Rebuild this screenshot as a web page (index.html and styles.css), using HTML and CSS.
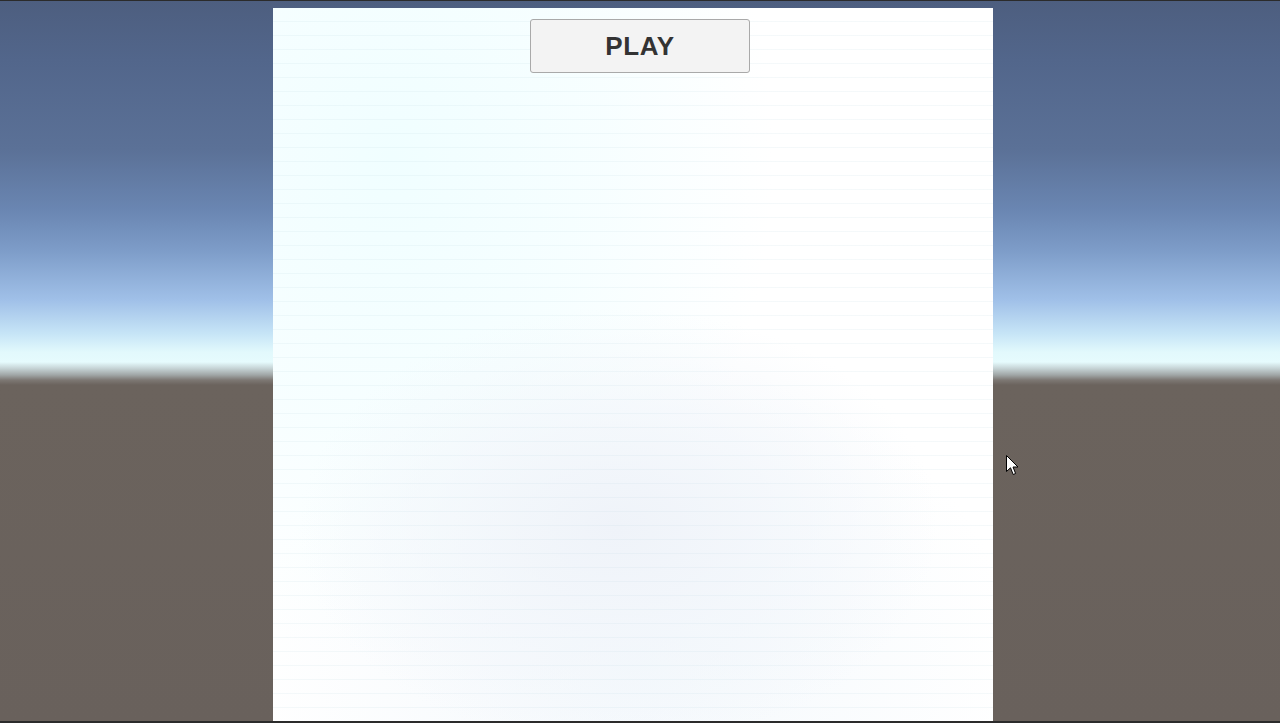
FILE: index.html
```html
<!DOCTYPE html>
<html>
<head>
<meta charset="utf-8">
<link rel="stylesheet" href="styles.css">
</head>
<body>
<div class="screen">
  <div class="topbar"></div>
  <div class="stage">
    <div class="panel">
      <button class="play">PLAY</button>
    </div>
  </div>
  <div class="bottombar"></div>
  <svg class="cursor" width="13" height="21" viewBox="0 0 13 21">
    <path d="M0.5 0.5 L0.5 16.5 L4.5 12.8 L7.2 19.5 L9.6 18.5 L7 12 L12 12 Z" fill="#fff" stroke="#000" stroke-width="1"/>
  </svg>
</div>
</body>
</html>
```
FILE: styles.css
```css
html, body {
  margin: 0;
  padding: 0;
  width: 1280px;
  height: 723px;
  overflow: hidden;
}
body {
  font-family: "Liberation Sans", Arial, sans-serif;
}
.screen {
  position: relative;
  width: 1280px;
  height: 723px;
  display: flex;
  flex-direction: column;
  background: linear-gradient(to bottom,
    #4d5e7f 0px,
    #52668b 60px,
    #5b7197 150px,
    #6a86b2 210px,
    #7d9cc8 250px,
    #a0c0e8 300px,
    #c8e6f7 335px,
    #e2f9fc 352px,
    #e6fbfd 362px,
    #c8d6d8 368px,
    #a0a6a6 375px,
    #7d7874 380px,
    #6b635d 385px,
    #69615c 723px);
}
.topbar {
  height: 1px;
  background: #2b2b2b;
  flex: none;
}
.stage {
  flex: 1;
  padding: 7px 0 0 273px;
  display: flex;
}
.panel {
  width: 720px;
  height: 713px;
  background:
    repeating-linear-gradient(to bottom, transparent 0px, transparent 13px, rgba(190, 215, 225, 0.16) 13px, rgba(190, 215, 225, 0.16) 14px),
    radial-gradient(ellipse 320px 220px at 345px 520px, rgba(239, 243, 249, 1) 0%, rgba(242, 246, 251, 0.7) 50%, rgba(255, 255, 255, 0) 100%),
    radial-gradient(ellipse 380px 500px at 120px 150px, rgba(240, 254, 255, 1) 0%, rgba(244, 254, 255, 0.75) 55%, rgba(255, 255, 255, 0) 100%),
    radial-gradient(ellipse 380px 300px at 360px 650px, rgba(243, 248, 252, 1) 0%, rgba(255, 255, 255, 0) 100%),
    #ffffff;
}
.play {
  margin: 11px 0 0 257px;
  width: 220px;
  height: 54px;
  background: #f3f3f3;
  border: 1px solid #a9a9a9;
  border-radius: 3px;
  font-family: "Liberation Sans", Arial, sans-serif;
  font-weight: bold;
  font-size: 26px;
  color: #333333;
  letter-spacing: 0.6px;
  padding: 0;
  padding-top: 1px;
}
.bottombar {
  height: 2px;
  background: #2b2b2b;
  flex: none;
}
.cursor {
  position: absolute;
  left: 1006px;
  top: 455px;
}
```
